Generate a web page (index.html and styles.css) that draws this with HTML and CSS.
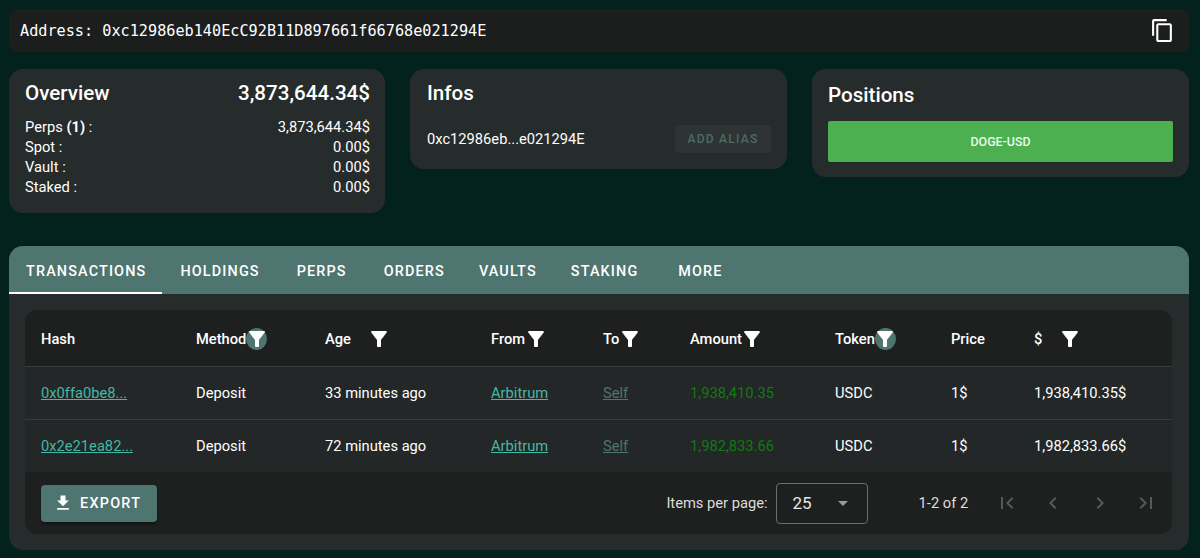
FILE: index.html
```html
<!DOCTYPE html>
<html lang="en">
<head>
<meta charset="utf-8">
<title>Address</title>
<link rel="stylesheet" href="styles.css">
</head>
<body>
<main class="page">
  <section class="address-bar">
    <span class="address-text">Address: 0xc12986eb140EcC92B11D897661f66768e021294E</span>
    <svg class="copy-icon" viewBox="0 0 24 24"><path d="M16 1H4c-1.1 0-2 .9-2 2v14h2V3h12V1zm3 4H8c-1.1 0-2 .9-2 2v14c0 1.1.9 2 2 2h11c1.1 0 2-.9 2-2V7c0-1.1-.9-2-2-2zm0 16H8V7h11v14z"/></svg>
  </section>

  <section class="cards">
    <article class="card card-overview">
      <div class="card-head"><h2>Overview</h2><span class="total">3,873,644.34$</span></div>
      <div class="stat"><span>Perps <b>(1)</b> :</span><span>3,873,644.34$</span></div>
      <div class="stat"><span>Spot :</span><span>0.00$</span></div>
      <div class="stat"><span>Vault :</span><span>0.00$</span></div>
      <div class="stat"><span>Staked :</span><span>0.00$</span></div>
    </article>
    <article class="card card-infos">
      <h2>Infos</h2>
      <div class="alias-row"><span>0xc12986eb...e021294E</span><button class="alias-btn" disabled>ADD ALIAS</button></div>
    </article>
    <article class="card card-positions">
      <h2>Positions</h2>
      <button class="position-btn">DOGE-USD</button>
    </article>
  </section>

  <section class="panel">
    <nav class="tabs">
      <a class="tab tab-active">TRANSACTIONS</a>
      <a class="tab">HOLDINGS</a>
      <a class="tab">PERPS</a>
      <a class="tab">ORDERS</a>
      <a class="tab">VAULTS</a>
      <a class="tab">STAKING</a>
      <a class="tab">MORE</a>
    </nav>
    <div class="panel-body">
      <div class="table-wrap">
        <table class="tx-table">
          <colgroup>
            <col class="c-hash"><col class="c-method"><col class="c-age"><col class="c-from"><col class="c-to"><col class="c-amount"><col class="c-token"><col class="c-price"><col class="c-usd">
          </colgroup>
          <thead>
            <tr>
              <th>Hash</th>
              <th><span class="th-in">Method<span class="filter filter-on"><svg viewBox="0 0 24 24"><use href="#funnel"/></svg></span></span></th>
              <th><span class="th-in">Age<span class="filter gap-age"><svg viewBox="0 0 24 24"><use href="#funnel"/></svg></span></span></th>
              <th><span class="th-in">From<span class="filter"><svg viewBox="0 0 24 24"><use href="#funnel"/></svg></span></span></th>
              <th><span class="th-in">To<span class="filter"><svg viewBox="0 0 24 24"><use href="#funnel"/></svg></span></span></th>
              <th><span class="th-in">Amount<span class="filter"><svg viewBox="0 0 24 24"><use href="#funnel"/></svg></span></span></th>
              <th><span class="th-in">Token<span class="filter filter-on"><svg viewBox="0 0 24 24"><use href="#funnel"/></svg></span></span></th>
              <th>Price</th>
              <th><span class="th-in">$<span class="filter gap-usd"><svg viewBox="0 0 24 24"><use href="#funnel"/></svg></span></span></th>
            </tr>
          </thead>
          <tbody>
            <tr>
              <td><a class="link">0x0ffa0be8...</a></td><td>Deposit</td><td>33 minutes ago</td><td><a class="link">Arbitrum</a></td><td><a class="self">Self</a></td><td class="amount">1,938,410.35</td><td>USDC</td><td>1$</td><td>1,938,410.35$</td>
            </tr>
            <tr>
              <td><a class="link">0x2e21ea82...</a></td><td>Deposit</td><td>72 minutes ago</td><td><a class="link">Arbitrum</a></td><td><a class="self">Self</a></td><td class="amount">1,982,833.66</td><td>USDC</td><td>1$</td><td>1,982,833.66$</td>
            </tr>
          </tbody>
        </table>
        <footer class="table-foot">
          <button class="export-btn"><svg viewBox="0 0 24 24"><path d="M19 9h-4V3H9v6H5l7 7 7-7zM5 18v2h14v-2H5z"/></svg>EXPORT</button>
          <div class="pager">
            <span class="per-label">Items per page:</span>
            <div class="per-select"><span>25</span><i class="caret"></i></div>
            <span class="range">1-2 of 2</span>
            <svg class="pg" viewBox="0 0 24 24"><path d="M18.41 16.59 13.82 12l4.59-4.59L17 6l-6 6 6 6zM6 6h2v12H6z"/></svg>
            <svg class="pg" viewBox="0 0 24 24"><path d="M15.41 7.41 14 6l-6 6 6 6 1.41-1.41L10.83 12z"/></svg>
            <svg class="pg" viewBox="0 0 24 24"><path d="M10 6 8.59 7.41 13.17 12l-4.58 4.59L10 18l6-6z"/></svg>
            <svg class="pg" viewBox="0 0 24 24"><path d="M5.59 7.41 10.18 12l-4.59 4.59L7 18l6-6-6-6zM16 6h2v12h-2z"/></svg>
          </div>
        </footer>
      </div>
    </div>
  </section>
</main>
<svg class="defs" aria-hidden="true"><defs><path id="funnel" d="M4.25 5.61C6.27 8.2 10 13 10 13v6c0 .55.45 1 1 1h2c.55 0 1-.45 1-1v-6s3.72-4.8 5.74-7.39c.51-.66.04-1.61-.79-1.61H5.04c-.83 0-1.3.95-.79 1.61z"/></defs></svg>
</body>
</html>
```
FILE: styles.css
```css
* { box-sizing: border-box; }
html, body { margin: 0; height: 100%; }
body {
  background: #03221e;
  color: #fff;
  font-family: Roboto, "Liberation Sans", sans-serif;
  font-size: 14.7px;
  overflow: hidden;
}
.defs { display: none; }
.page { padding: 9px 11px 0 9px; display: flex; flex-direction: column; }

.address-bar {
  height: 43px;
  background: #1c1e1d;
  border-radius: 8px;
  display: flex;
  align-items: center;
  justify-content: space-between;
  padding: 0 14px 0 11px;
  margin-bottom: 17px;
}
.address-text {
  font-family: "DejaVu Sans Mono", monospace;
  font-size: 15.2px;
}
.copy-icon { width: 25px; height: 25px; fill: #fff; }

.cards { display: flex; align-items: flex-start; gap: 25px; margin-bottom: 33px; }
.card {
  flex: 1 1 100px;
  background: #262b2b;
  border-radius: 14px;
  padding: 12px 16px 0;
}
.card h2 { margin: 0; font-size: 20.6px; font-weight: 500; line-height: 24px; }
.card-overview { flex: 0 0 376px; height: 144px; padding-right: 15px; }
.card-head { display: flex; justify-content: space-between; align-items: center; margin-bottom: 13px; }
.total { font-size: 20.6px; font-weight: 500; line-height: 24px; }
.stat { display: flex; justify-content: space-between; line-height: 19.9px; height: 19.9px; }
.stat b { font-weight: 700; }
.card-infos { height: 100px; padding-left: 17px; }
.alias-row { display: flex; justify-content: space-between; align-items: center; margin-top: 20px; }
.alias-btn {
  width: 96px;
  height: 28px;
  border: 0;
  border-radius: 4px;
  background: #2d3433;
  color: #4f6966;
  font: 500 12px Roboto, sans-serif;
  letter-spacing: 1.25px;
  padding: 0;
}
.card-positions { height: 108px; padding-top: 14px; }
.position-btn {
  display: block;
  width: 100%;
  height: 41px;
  margin-top: 14px;
  border: 0;
  border-radius: 2px;
  background: #4caf50;
  color: #eafbea;
  font: 500 12.4px Roboto, sans-serif;
}

.panel { background: #262b2b; border-radius: 14px; height: 304px; overflow: hidden; }
.tabs { display: flex; height: 48px; background: #4f7570; }
.tab {
  min-width: 90px;
  padding: 2px 17px 0;
  display: flex;
  align-items: center;
  justify-content: center;
  font-size: 14.4px;
  font-weight: 500;
  letter-spacing: 1.15px;
}
.tab-active { border-bottom: 2px solid #fff; padding: 4px 16px 0 17px; margin-right: 1px; }

.panel-body { padding: 16px 17px 0 16px; }
.table-wrap { background: #1e1f1f; border-radius: 12px; overflow: hidden; }
.tx-table { width: 100%; border-collapse: collapse; table-layout: fixed; }
.c-hash { width: 155px; }
.c-method { width: 129px; }
.c-age { width: 166px; }
.c-from { width: 112px; }
.c-to { width: 87px; }
.c-amount { width: 145px; }
.c-token { width: 116px; }
.c-price { width: 83px; }
.tx-table th, .tx-table td { padding: 0 0 0 16px; text-align: left; white-space: nowrap; }
.tx-table th { height: 56px; padding-top: 2px; font-weight: 500; border-bottom: 1px solid #383c3c; }
.tx-table td { height: 53px; background: #232727; font-weight: 400; }
.tx-table tbody tr:first-child td { border-bottom: 1px solid #383c3c; }
.th-in { display: inline-flex; align-items: center; }
.filter {
  width: 21px;
  height: 22px;
  border-radius: 50%;
  display: inline-flex;
  align-items: center;
  justify-content: center;
}
.filter svg { width: 24px; height: 24px; fill: #fff; flex: none; }
.filter-on { background: #4f7570; }
.gap-age { margin-left: 18px; }
.gap-usd { margin-left: 17px; }
.link { color: #45b8a4; text-decoration: underline; }
.self { color: #4f7570; text-decoration: underline; }
.amount { color: #127a12; }

.table-foot {
  height: 62px;
  display: flex;
  align-items: center;
  justify-content: space-between;
  padding: 0 14px 0 16px;
}
.export-btn {
  width: 116px;
  height: 37px;
  border: 0;
  border-radius: 4px;
  background: #4f7570;
  color: #fff;
  display: flex;
  align-items: center;
  padding: 0 0 0 12px;
  gap: 7px;
  font: 500 14.4px Roboto, sans-serif;
  letter-spacing: 1.25px;
  box-shadow: 0 2px 3px rgba(0,0,0,.4);
}
.export-btn svg { width: 20px; height: 20px; fill: #fff; }
.pager { display: flex; align-items: center; color: #dcdddd; }
.per-label { margin-right: 8px; }
.per-select {
  width: 92px;
  height: 41px;
  border: 1px solid #6c6e6e;
  border-radius: 4px;
  display: flex;
  align-items: center;
  justify-content: space-between;
  padding: 0 19px 0 16px;
  color: #e6e6e6;
  font-size: 17px;
  margin-right: 51px;
}
.caret { width: 0; height: 0; border-left: 5px solid transparent; border-right: 5px solid transparent; border-top: 5px solid #9a9b9b; }
.range { margin-right: 27px; }
.pg { width: 24px; height: 24px; fill: #575858; margin: 0 11.15px; }
.pg:first-of-type { margin-left: 0; }
.pg:last-of-type { margin-right: 0; }
```
